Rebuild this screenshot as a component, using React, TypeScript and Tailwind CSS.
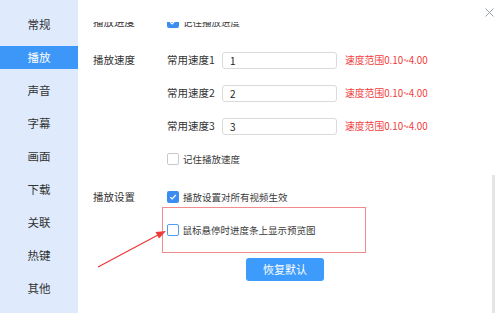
import React from "react";

const font = { fontFamily: '"Noto Sans CJK SC", "Noto Sans", sans-serif' };

function Box({ checked, hover }: { checked?: boolean; hover?: boolean }) {
  if (checked) {
    return (
      <span className="flex h-[12px] w-[12px] shrink-0 items-center justify-center rounded-[2px] bg-[#3b8ef0]">
        <svg width="8" height="8" viewBox="0 0 8 8">
          <path d="M1.3 4.2 L3.2 6 L6.8 2" fill="none" stroke="#fff" strokeWidth="1.2" />
        </svg>
      </span>
    );
  }
  return (
    <span
      className={
        hover
          ? "block h-[12px] w-[12px] shrink-0 rounded-[2px] border border-[#4d9cf6] bg-white"
          : "block h-[12px] w-[12px] shrink-0 rounded-[2px] border border-[#c9c9c9] bg-white"
      }
    />
  );
}

function SpeedRow({ n, mt }: { n: number; mt: string }) {
  return (
    <div className={`flex h-[18px] items-center ${mt}`}>
      <div className="w-[74px] text-[10.5px] text-[#333]">{n === 1 ? "播放速度" : ""}</div>
      <div className="w-[55px] text-[10.5px] text-[#333]">常用速度{n}</div>
      <div className="flex h-[17px] w-[115px] items-center rounded-[3px] border border-[#dadada] pl-[7px] text-[10px] text-[#222]">
        {n}
      </div>
      <div className="ml-[8px] text-[9.8px] text-[#f23b3b]">速度范围0.10~4.00</div>
    </div>
  );
}

export default function App() {
  const sideItems = ["常规", "播放", "声音", "字幕", "画面", "下载", "关联", "热键", "其他"];
  return (
    <div className="relative flex h-[313px] w-[500px] overflow-hidden bg-white" style={font}>
      {/* sidebar */}
      <div className="flex w-[78px] shrink-0 flex-col gap-[10px] bg-[#dfebfd] pt-[13px]">
        {sideItems.map((t) => (
          <div
            key={t}
            className={
              t === "播放"
                ? "flex h-[23px] items-center justify-center bg-[#3d97f8] text-[11.5px] text-white"
                : "flex h-[23px] items-center justify-center text-[11.5px] text-[#333]"
            }
          >
            {t}
          </div>
        ))}
      </div>

      {/* main */}
      <div className="flex flex-1 flex-col">
        <div className="flex h-[22px] shrink-0 items-start justify-end pr-[6px] pt-[8px]">
          <svg width="9" height="9" viewBox="0 0 9 9">
            <path d="M0.5 0.5 L8.5 8.5 M8.5 0.5 L0.5 8.5" stroke="#9aa0a8" strokeWidth="1" />
          </svg>
        </div>
        <div className="relative flex-1 overflow-hidden">
          <div className="mt-[-9px] flex flex-col pl-[15px]">
            <div className="flex h-[18px] items-center">
              <div className="w-[74px] text-[10.5px] text-[#333]">播放进度</div>
              <Box checked />
              <span className="ml-[4px] text-[9.5px] text-[#3a3a3a]">记住播放进度</span>
            </div>
            <SpeedRow n={1} mt="mt-[20px]" />
            <SpeedRow n={2} mt="mt-[15px]" />
            <SpeedRow n={3} mt="mt-[15px]" />
            <div className="mt-[15px] flex h-[18px] items-center pl-[74px]">
              <Box />
              <span className="ml-[4px] text-[9.5px] text-[#3a3a3a]">记住播放速度</span>
            </div>
            <div className="mt-[20px] flex h-[18px] items-center">
              <div className="w-[74px] text-[10.5px] text-[#333]">播放设置</div>
              <Box checked />
              <span className="ml-[4px] text-[9.5px] text-[#3a3a3a]">播放设置对所有视频生效</span>
            </div>
            <div className="ml-[69px] mt-[1px] flex h-[46px] w-[204px] items-center border-[1.5px] border-[#f28b8d] pl-[3.5px]">
              <Box hover />
              <span className="ml-[4px] text-[9.5px] text-[#3a3a3a]">鼠标悬停时进度条上显示预览图</span>
            </div>
            <div className="ml-[153px] mt-[5px] flex h-[23px] w-[78px] items-center justify-center rounded-[3px] bg-[#3d9bfb] text-[11px] text-white">
              恢复默认
            </div>
          </div>
          {/* scrollbar */}
          <div className="absolute right-[5px] top-[153px] h-[160px] w-[3px] bg-[#e4e4e4]" />
        </div>
      </div>

      {/* annotation arrow */}
      <svg className="pointer-events-none absolute left-0 top-0" width="500" height="313">
        <line x1="98" y1="267" x2="158" y2="235" stroke="#ee3a3a" strokeWidth="1.3" />
        <polygon points="166,231 155.5,232 159,238.5" fill="#ee3a3a" />
      </svg>
    </div>
  );
}
